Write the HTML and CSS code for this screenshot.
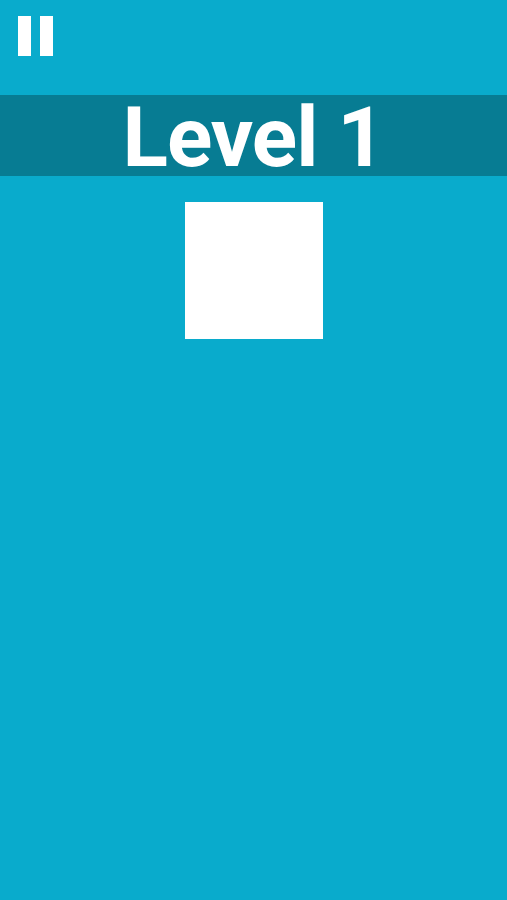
FILE: index.html
```html
<!DOCTYPE html>
<html>
<head>
<meta charset="utf-8">
<link rel="stylesheet" href="styles.css">
</head>
<body>
<div class="screen">
  <div class="topbar">
    <div class="pause" aria-label="Pause"><span class="bar"></span><span class="bar"></span></div>
  </div>
  <div class="band"><h1 class="title">Level 1</h1></div>
  <div class="stage"><div class="tile"></div></div>
</div>
</body>
</html>
```
FILE: styles.css
```css
html, body {
  margin: 0;
  padding: 0;
  background: #09abcc;
}
.screen {
  width: 507px;
  height: 900px;
  background: #09abcc;
  display: flex;
  flex-direction: column;
  font-family: Roboto, "Liberation Sans", Arial, sans-serif;
}
.topbar {
  height: 95px;
  box-sizing: border-box;
  padding: 16px 0 0 18px;
}
.pause {
  display: flex;
  gap: 9px;
}
.bar {
  width: 13px;
  height: 40px;
  background: #ffffff;
}
.band {
  height: 81px;
  background: #077c93;
  display: flex;
  align-items: center;
  justify-content: center;
}
.title {
  margin: 0;
  color: #ffffff;
  font-size: 84px;
  font-weight: bold;
  letter-spacing: -1px;
  line-height: 1;
  padding-top: 4px;
}
.stage {
  display: flex;
  justify-content: center;
  padding-top: 26px;
}
.tile {
  width: 138px;
  height: 137px;
  background: #ffffff;
  margin-left: 1px;
}
```
